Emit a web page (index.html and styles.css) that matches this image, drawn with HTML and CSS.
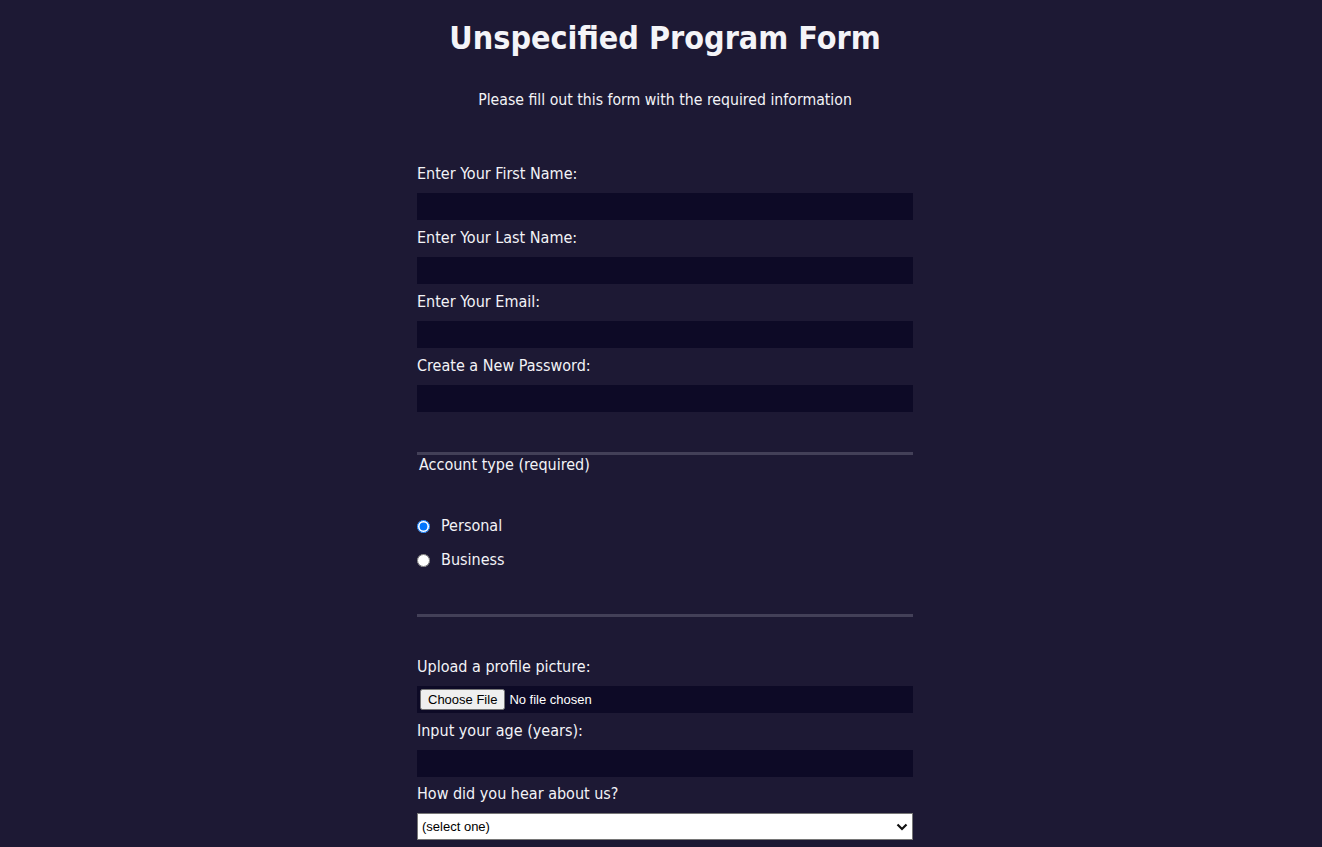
FILE: index.html
```html
<!DOCTYPE html>
<html lang="en">
<head>
<meta charset="utf-8">
<title>Unspecified Program Form</title>
<link rel="stylesheet" href="styles.css">
</head>
<body>
<header class="intro">
  <h1 class="title">Unspecified Program Form</h1>
  <p class="subtitle">Please fill out this form with the required information</p>
</header>
<form class="form">
  <label class="field-label" for="first">Enter Your First Name:</label>
  <input class="text-input" id="first" type="text">
  <label class="field-label" for="last">Enter Your Last Name:</label>
  <input class="text-input" id="last" type="text">
  <label class="field-label" for="email">Enter Your Email:</label>
  <input class="text-input" id="email" type="email">
  <label class="field-label" for="pw">Create a New Password:</label>
  <input class="text-input" id="pw" type="password">

  <fieldset class="group">
    <div class="group-title">Account type (required)</div>
    <label class="radio-row"><input class="radio" type="radio" name="acct" checked><span>Personal</span></label>
    <label class="radio-row"><input class="radio" type="radio" name="acct"><span>Business</span></label>
  </fieldset>

  <label class="field-label" for="pic">Upload a profile picture:</label>
  <input class="file-input" id="pic" type="file">
  <label class="field-label" for="age">Input your age (years):</label>
  <input class="text-input" id="age" type="number">
  <label class="field-label field-label-tight" for="ref">How did you hear about us?</label>
  <div class="select-wrap">
    <select class="select" id="ref">
      <option>(select one)</option>
      <option>Friend</option>
      <option>Search engine</option>
    </select>
    <svg class="chevron" width="12" height="8" viewBox="0 0 12 8"><path d="M1.5 1.5 L6 6 L10.5 1.5" fill="none" stroke="#111" stroke-width="2.2"/></svg>
  </div>
</form>
</body>
</html>
```
FILE: styles.css
```css
html, body {
  background: #1d1934;
}
body {
  margin: 0 0 0 8px;
  color: #f3f3f7;
  font-family: "DejaVu Sans Condensed", "DejaVu Sans", sans-serif;
  font-stretch: condensed;
  font-size: 16px;
}
.intro {
  text-align: center;
  padding-top: 18px;
}
.title {
  margin: 0;
  font-size: 32px;
  line-height: 40px;
  font-weight: bold;
  color: #f4f4f8;
}
.subtitle {
  margin: 32px 0 0;
  font-size: 15.7px;
  line-height: 20px;
}
.form {
  width: 496px;
  margin: 54px auto 0;
  display: flex;
  flex-direction: column;
}
.field-label {
  display: block;
  font-size: 16px;
  line-height: 20px;
  margin: 8px 0 9px;
}
.form > .field-label:first-child {
  margin-top: 0;
}
.field-label-tight {
  margin-top: 7px;
}
.text-input {
  display: block;
  box-sizing: border-box;
  width: 100%;
  height: 27px;
  margin: 0;
  border: 0;
  background: #0d0a26;
  color: #fff;
  padding: 2px 4px;
}
.group {
  margin: 40px 0 0;
  padding: 0;
  border: 0;
  border-top: 3px solid #434058;
  border-bottom: 3px solid #434058;
  min-width: 0;
  padding-bottom: 44px;
}
.group-title {
  font-size: 16px;
  line-height: 20px;
  padding-left: 2px;
  margin-bottom: 41px;
}
.radio-row {
  display: flex;
  align-items: center;
  height: 20px;
  line-height: 20px;
  font-size: 16px;
  margin-bottom: 14px;
}
.radio-row:last-child {
  margin-bottom: 0;
}
.radio {
  margin: 0 11px 0 0;
  width: 13px;
  height: 13px;
}
.group + .field-label {
  margin-top: 40px;
}
.file-input {
  display: block;
  box-sizing: border-box;
  width: 100%;
  height: 27px;
  margin: 0;
  padding: 3px 3px;
  background: #0d0a26;
  color: #fff;
  font-family: "Liberation Sans", Arial, sans-serif;
  font-size: 13px;
}
.select-wrap {
  position: relative;
  width: 100%;
}
.select {
  display: block;
  width: 100%;
  height: 27px;
  box-sizing: border-box;
  margin: 0;
  -webkit-appearance: none;
  appearance: none;
  background: #fff;
  color: #000;
  border: 1px solid #767676;
  border-radius: 0;
  padding: 0 4px;
  font-family: "Liberation Sans", Arial, sans-serif;
  font-size: 13px;
}
.chevron {
  position: absolute;
  right: 5px;
  top: 10px;
  pointer-events: none;
}
```
